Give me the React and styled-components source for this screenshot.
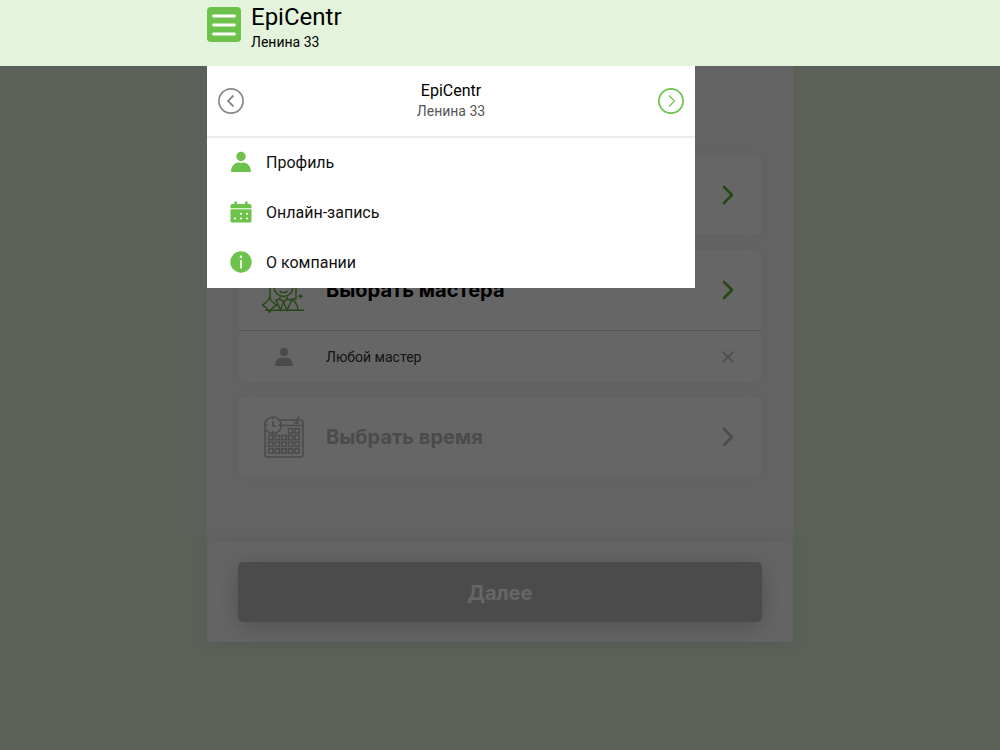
import React from "react";
import styled, { createGlobalStyle } from "styled-components";

const menuItems = [
  { id: "profile", label: "Профиль", icon: "user" },
  { id: "booking", label: "Онлайн-запись", icon: "calendar" },
  { id: "about", label: "О компании", icon: "info" },
];

const UserIcon = ({ size }) => (
  <svg width={size} height={size} viewBox="0 0 22 22" fill="currentColor">
    <circle cx="11" cy="5.500" r="4.700" />
    <path d="M1 21c0-5.400 3.400-9.400 7.800-9.400 1.400.5 3 .5 4.400 0C17.600 11.600 21 15.600 21 21z" />
  </svg>
);

const CalendarIcon = () => (
  <svg width="22" height="22" viewBox="0 0 22 22" fill="currentColor">
    <path d="M.5 7.300V4.500a1.600 1.600 0 0 1 1.600-1.600h2.300V1.500a1.300 1.300 0 0 1 2.600 0v1.400h8V1.500a1.300 1.300 0 0 1 2.600 0v1.400h2.300a1.600 1.600 0 0 1 1.600 1.600v2.800z" />
    <path d="M.5 8.300h21v11.700a1.600 1.600 0 0 1-1.600 1.600H2.100A1.600 1.600 0 0 1 .5 20z" />
    <g fill="#fff">
      <circle cx="11" cy="12.800" r="1.100" />
      <circle cx="17" cy="12.800" r="1.100" />
      <circle cx="5" cy="17.500" r="1.100" />
      <circle cx="11" cy="17.500" r="1.100" />
      <circle cx="17" cy="17.500" r="1.100" />
    </g>
  </svg>
);

const InfoIcon = () => (
  <svg width="22" height="22" viewBox="0 0 22 22">
    <circle cx="11" cy="11" r="10.700" fill="currentColor" />
    <circle cx="11" cy="5.800" r="1.300" fill="#fff" />
    <path d="M11 9v8.500" stroke="#fff" strokeWidth="1.700" />
  </svg>
);

const ArrowIcon = () => (
  <svg width="12" height="20" viewBox="0 0 12 20" fill="none">
    <path
      d="M2 2l8 8-8 8"
      stroke="currentColor"
      strokeWidth="2.600"
      strokeLinecap="round"
      strokeLinejoin="round"
    />
  </svg>
);

const CrossIcon = () => (
  <svg width="12" height="12" viewBox="0 0 12 12">
    <path d="M.5.5l11 11M11.500.5l-11 11" stroke="currentColor" strokeWidth="1.700" />
  </svg>
);

const BurgerIcon = () => (
  <svg width="24" height="22" viewBox="0 0 24 22">
    <path
      d="M1.500 2h21M1.500 11h21M1.500 20h21"
      stroke="currentColor"
      strokeWidth="2.800"
      strokeLinecap="round"
    />
  </svg>
);

const CircleArrow = ({ back }) => (
  <svg width="26" height="26" viewBox="0 0 26 26" fill="none" stroke="currentColor">
    <circle cx="13" cy="13" r="12.100" strokeWidth="1.700" />
    {back ? (
      <path d="M15.500 7.500L10 13l5.500 5.500" strokeWidth="1.800" />
    ) : (
      <path d="M11 7.500l5.500 5.500-5.500 5.500" strokeWidth="1.100" />
    )}
  </svg>
);

const MasterIcon = () => (
  <svg width="44" height="46" viewBox="0 0 44 46" fill="none" stroke="currentColor" strokeWidth="1.400">
    <path d="M8 31V13C8 5 13 1 21 1s13 4 13 12v19h-5" />
    <path d="M12 14v6c0 5.500 4.300 9.500 9.500 9.500S31 25.500 31 20v-6c-7 0-12-2-14-6-1 3-3 5-5 6z" />
    <path d="M16 17h2M25 17h2M17.500 24c2.200 2.200 5.800 2.200 8 0M18 29.500V32M25 29.500V32" />
    <path d="M7.500 30.500c1.500 3.500 4 6 7.500 7.500-3.500 1.500-6 4-7.500 7.500C6 42 3.500 39.500 0 38c3.500-1.500 6-4 7.500-7.500z" />
    <path d="M3 43.300h39M13 33.500l5-1.500 3.500 3L25 32l6 1.500c3 1.500 4.500 5 5 9.500M14.500 34l4 9 3-8 3.500 8 4.500-9.500" />
    <path d="M38.500 27v4.500M36.300 29.200h4.500" />
  </svg>
);

const TimeIcon = () => {
  const cells = [];
  for (let row = 0; row < 4; row++) {
    for (let col = row === 0 ? 3 : 0; col < 5; col++) {
      cells.push(
        <rect key={`${row}-${col}`} x={4.6 + col * 6.6} y={12.700 + row * 6.700} width="4.300" height="4.300" />
      );
    }
  }
  return (
    <svg width="40" height="42" viewBox="0 0 40 42" fill="none" stroke="currentColor" strokeWidth="1.600">
      <path d="M1 13v25.500a2.500 2.500 0 0 0 2.500 2.500h33a2.500 2.500 0 0 0 2.500-2.500v-32A2.500 2.500 0 0 0 36.500 4H15M17 9.500h22" />
      <path d="M36 1c-2 0-3 1.500-3 6M30 7h5" />
      <circle cx="9" cy="9.300" r="8.300" />
      <path d="M9 5v5h3M9 1v2.500M9 15v2.500M1 9.300h2.500M14.500 9.300H17" />
      {cells}
    </svg>
  );
};

const icons = {
  user: <UserIcon size={22} />,
  calendar: <CalendarIcon />,
  info: <InfoIcon />,
};

const App = () => {
  return (
    <React.Fragment>
      <GlobalStyle />
      <Header>
        <HeaderInner>
          <BurgerButton type="button" aria-label="Меню">
            <BurgerIcon />
          </BurgerButton>
          <div>
            <CompanyName>EpiCentr</CompanyName>
            <CompanyAddress>Ленина 33</CompanyAddress>
          </div>
          <Menu>
            <MenuHeader>
              <RoundButton type="button" aria-label="Назад">
                <CircleArrow back />
              </RoundButton>
              <MenuTitle>
                <MenuCompany>EpiCentr</MenuCompany>
                <MenuAddress>Ленина 33</MenuAddress>
              </MenuTitle>
              <RoundButton type="button" $active aria-label="Вперёд">
                <CircleArrow />
              </RoundButton>
            </MenuHeader>
            {menuItems.map((item) => (
              <MenuLink key={item.id} href={`#${item.id}`}>
                {icons[item.icon]}
                {item.label}
              </MenuLink>
            ))}
          </Menu>
        </HeaderInner>
      </Header>
      <Page>
        <Column>
          <Steps>
            <Card>
              <Step type="button" aria-label="Выбрать">
                <StepIcon />
                <StepTitle />
                <ArrowIcon />
              </Step>
            </Card>
            <Card>
              <Step type="button">
                <StepIcon>
                  <MasterIcon />
                </StepIcon>
                <StepTitle>Выбрать мастера</StepTitle>
                <ArrowIcon />
              </Step>
              <Choice>
                <ChoiceIcon>
                  <UserIcon size={20} />
                </ChoiceIcon>
                <ChoiceName>Любой мастер</ChoiceName>
                <ClearButton type="button" aria-label="Удалить">
                  <CrossIcon />
                </ClearButton>
              </Choice>
            </Card>
            <Card>
              <Step type="button" disabled>
                <StepIcon>
                  <TimeIcon />
                </StepIcon>
                <StepTitle>Выбрать время</StepTitle>
                <ArrowIcon />
              </Step>
            </Card>
          </Steps>
          <Footer>
            <NextButton type="button" disabled>
              Далее
            </NextButton>
          </Footer>
        </Column>
        <Overlay />
      </Page>
    </React.Fragment>
  );
};

const GlobalStyle = createGlobalStyle`
  * {
    box-sizing: border-box;
  }

  body {
    margin: 0;
    background: #e3f3dc;
    color: #000;
    font-family: Roboto, "Open Sans", sans-serif;
  }

  button {
    padding: 0;
    border: 0;
    background: none;
    font-family: inherit;
    cursor: pointer;
  }

  svg {
    display: block;
    flex-shrink: 0;
  }
`;

const Header = styled.header`
  position: relative;
  z-index: 2;
  height: 66px;
  background: #e3f3dc;
`;

const HeaderInner = styled.div`
  position: relative;
  display: flex;
  gap: 10px;
  max-width: 586px;
  height: 100%;
  margin: 0 auto;
`;

const BurgerButton = styled.button`
  display: flex;
  align-items: center;
  justify-content: center;
  width: 34px;
  height: 35px;
  margin-top: 7px;
  border-radius: 4px;
  background: #6cc24a;
  color: #fff;
`;

const CompanyName = styled.div`
  padding-top: 2px;
  font-size: 24px;
  line-height: 30px;
`;

const CompanyAddress = styled.div`
  font-size: 14px;
  line-height: 20px;
`;

const Menu = styled.nav`
  position: absolute;
  top: 100%;
  left: 0;
  width: 488px;
  max-width: 100%;
  background: #fff;
`;

const MenuHeader = styled.div`
  display: flex;
  align-items: center;
  justify-content: space-between;
  height: 72px;
  padding: 0 11px;
  border-bottom: 2px solid #ebecec;
`;

const MenuTitle = styled.div`
  text-align: center;
  line-height: 20px;
`;

const MenuCompany = styled.div`
  font-size: 16px;
`;

const MenuAddress = styled.div`
  font-size: 14px;
  color: #555;
`;

const RoundButton = styled.button`
  color: ${(props) => (props.$active ? "#6cc24a" : "#888")};
`;

const MenuLink = styled.a`
  display: flex;
  align-items: center;
  gap: 14px;
  height: 50px;
  padding: 0 23px 2px;
  color: #111;
  font-size: 16px;
  text-decoration: none;

  svg {
    color: #6cc24a;
  }
`;

const Page = styled.main`
  min-height: calc(100vh - 66px);
`;

const Column = styled.div`
  max-width: 586px;
  margin: 0 auto;
  background: #f9f9f9;
`;

const Steps = styled.div`
  display: flex;
  flex-direction: column;
  gap: 15px;
  padding: 89px 31px 65px;
`;

const Card = styled.section`
  border-radius: 8px;
  background: #fff;
  box-shadow: 0 0 15px rgba(0, 0, 0, 0.05);
`;

const Step = styled.button`
  display: flex;
  align-items: center;
  width: 100%;
  height: 80px;
  padding: 0 28px 0 24px;
  color: #5fb030;
  text-align: left;

  &:disabled {
    color: #bbb;
  }
`;

const StepIcon = styled.span`
  display: flex;
  justify-content: center;
  width: 44px;
  margin-right: 20px;
`;

const StepTitle = styled.span`
  flex: 1;
  color: #000;
  font-family: Inter, sans-serif;
  font-size: 20px;
  font-weight: 700;

  ${Step}:disabled & {
    color: #bbb;
  }
`;

const Choice = styled.div`
  display: flex;
  align-items: center;
  height: 52px;
  padding: 0 28px 0 24px;
  border-top: 1px solid #d8d8d8;
`;

const ChoiceIcon = styled(StepIcon)`
  color: #b8b8b8;
`;

const ChoiceName = styled.span`
  flex: 1;
  color: #333;
  font-size: 14px;
`;

const ClearButton = styled.button`
  color: #bbb;
`;

const Footer = styled.footer`
  padding: 20px 31px;
  background: #fbfbfb;
  box-shadow: 0 0 20px rgba(0, 0, 0, 0.08);
`;

const NextButton = styled.button`
  width: 100%;
  height: 60px;
  padding-top: 2px;
  border-radius: 5px;
  background: #bbb;
  box-shadow: 0 5px 25px rgba(0, 0, 0, 0.2);
  color: #fff;
  font-family: Inter, sans-serif;
  font-size: 20px;
  font-weight: 700;
`;

const Overlay = styled.div`
  position: fixed;
  inset: 0;
  z-index: 1;
  background: rgba(0, 0, 0, 0.6);
`;

export default App;
